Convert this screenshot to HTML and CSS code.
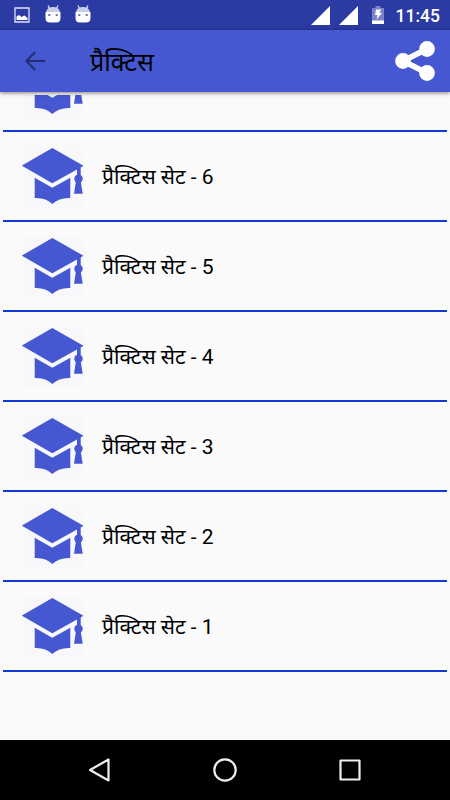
FILE: index.html
```html
<!DOCTYPE html>
<html lang="hi">
<head>
<meta charset="utf-8">
<title>प्रैक्टिस</title>
<link rel="stylesheet" href="styles.css">
</head>
<body>
<svg width="0" height="0" class="defs">
  <symbol id="cap" viewBox="0 0 62 62">
    <path d="M30.3 2 61.500 19.700 58.700 21.400V29.500A4.300 4.300 0 0 1 58.800 36L60.700 47.700H52L53.800 36A4.300 4.300 0 0 1 55 29.500V23.600L30.300 37.200-.3 19.700Z"/>
    <path d="M12.700 31.700 30.300 41.700 48.300 31.700V52Q37 51.500 30.300 58 24 51.500 12.700 52Z"/>
    <circle cx="56.500" cy="32.700" r="4.200"/>
  </symbol>
  <symbol id="droid" viewBox="0 0 16 18">
    <path d="M3 .5 4.500 3.500M13 .5 11.500 3.500" stroke="#e6e8f7" stroke-width="1.200"/>
    <path d="M1 7Q2 2 8 2t7 5Z" fill="#c9cdea"/>
    <path d="M.5 7h15v6q0 4.500-4.500 4.500H5Q.5 17.500.5 13Z" fill="#fff"/>
    <path d="M3.300 9h2v2h-2zM10.700 9h2v2h-2z" fill="#6872bd"/>
  </symbol>
</svg>
<div class="screen">
  <header class="status">
    <div class="notifications">
      <svg width="16" height="16" viewBox="0 0 16 16"><path d="M1 1h14v14H1z" fill="none" stroke="#dfe2f5" stroke-width="1.300"/><path d="M2.500 13V9.500L5 8l2.500 2 3-1.500 3 2.500v2z" fill="#fff"/></svg>
      <svg width="16" height="18"><use href="#droid"/></svg>
      <svg width="16" height="18"><use href="#droid"/></svg>
    </div>
    <div class="system">
      <svg class="signal" width="19" height="19"><path d="M0 19 19 0v19z" fill="#fff"/></svg>
      <svg class="signal" width="19" height="19"><path d="M0 19 19 0v19z" fill="#fff"/></svg>
      <svg class="battery" width="12" height="18"><path d="M3.500 0h5v2H12v13H0V2h3.500z" fill="#7a83c9"/><path d="M0 14.500h12V18H0zM4 3.500h5L7.500 7H10l-5.500 6.500L5.500 9H3z" fill="#fff"/></svg>
      <span class="clock">11:45</span>
    </div>
  </header>
  <nav class="appbar">
    <svg class="back" width="20" height="20" fill="none" stroke="#252c72" stroke-width="2.100"><path d="M20 10H1.500M10.200 1 1.500 10l8.700 9"/></svg>
    <h1 class="title">प्रैक्टिस</h1>
    <svg class="share" width="40" height="40" fill="#fff"><path d="M32 8 8 20 32 32" fill="none" stroke="#fff" stroke-width="5.800"/><circle cx="32" cy="8" r="7.900"/><circle cx="8" cy="20" r="7.900"/><circle cx="32" cy="32" r="7.900"/></svg>
  </nav>
  <main class="list">
    <div class="row row-cut"><svg class="cap"><use href="#cap"/></svg></div>
    <div class="row"><svg class="cap"><use href="#cap"/></svg><span class="label">प्रैक्टिस सेट - 6</span></div>
    <div class="row"><svg class="cap"><use href="#cap"/></svg><span class="label">प्रैक्टिस सेट - 5</span></div>
    <div class="row"><svg class="cap"><use href="#cap"/></svg><span class="label">प्रैक्टिस सेट - 4</span></div>
    <div class="row"><svg class="cap"><use href="#cap"/></svg><span class="label">प्रैक्टिस सेट - 3</span></div>
    <div class="row"><svg class="cap"><use href="#cap"/></svg><span class="label">प्रैक्टिस सेट - 2</span></div>
    <div class="row"><svg class="cap"><use href="#cap"/></svg><span class="label">प्रैक्टिस सेट - 1</span></div>
  </main>
  <footer class="navbar">
    <svg width="24" height="24"><path d="M20.500 1.500v21L2 12z"/></svg>
    <svg width="24" height="24"><circle cx="12" cy="12" r="10.700"/></svg>
    <svg width="24" height="24"><path d="M2.500 2.500h19v19h-19z"/></svg>
  </footer>
</div>
</body>
</html>
```

FILE: styles.css
```css
body {
  margin: 0;
  font-family: Roboto, "Noto Sans", "Noto Sans Devanagari", sans-serif;
  color: #000;
}

.defs {
  position: absolute;
}

.screen {
  display: flex;
  flex-direction: column;
  width: 450px;
  height: 800px;
  overflow: hidden;
  background: #fafafa;
}

.status {
  display: flex;
  justify-content: space-between;
  box-sizing: border-box;
  height: 30px;
  padding: 0 10px 0 14px;
  background: #2c3aa3;
}

.notifications,
.system {
  display: flex;
  align-items: center;
}

.notifications {
  gap: 14.500px;
}

.notifications svg {
  margin-top: -2px;
}

.notifications svg:first-child {
  margin-top: 0;
}

.signal {
  margin-right: 9px;
}

.battery {
  margin: 0 12px 0 5px;
}

.clock {
  padding-top: 2px;
  font-size: 17.500px;
  font-weight: 500;
  line-height: 30px;
  color: #fff;
}

.appbar {
  position: relative;
  z-index: 1;
  display: flex;
  align-items: center;
  box-sizing: border-box;
  height: 62px;
  padding: 0 15px 0 25px;
  background: #4558d1;
  box-shadow: 0 1px 4px rgba(0, 0, 0, .5);
}

.title {
  flex: 1;
  margin: 0 0 0 45px;
  padding-top: 4px;
  font-size: 25px;
  font-weight: 400;
  line-height: 58px;
}

.list {
  flex: 1;
  margin-top: 3px;
  overflow: hidden;
}

.row {
  display: flex;
  align-items: center;
  box-sizing: border-box;
  height: 90px;
  margin: 0 3px;
  padding: 2px 0 0 19px;
  border-bottom: 2px solid #1238d5;
}

.row-cut {
  margin-top: -53px;
}

.cap {
  width: 62px;
  height: 62px;
  margin-right: 18px;
  overflow: visible;
  background: #f8f8fb;
  fill: #4558d1;
}

.label {
  font-size: 21px;
  line-height: 30px;
  white-space: nowrap;
}

.navbar {
  display: flex;
  align-items: center;
  justify-content: center;
  gap: 101px;
  height: 60px;
  background: #000;
}

.navbar svg {
  fill: none;
  stroke: #eee;
  stroke-width: 2.200;
  stroke-linejoin: round;
}
```
